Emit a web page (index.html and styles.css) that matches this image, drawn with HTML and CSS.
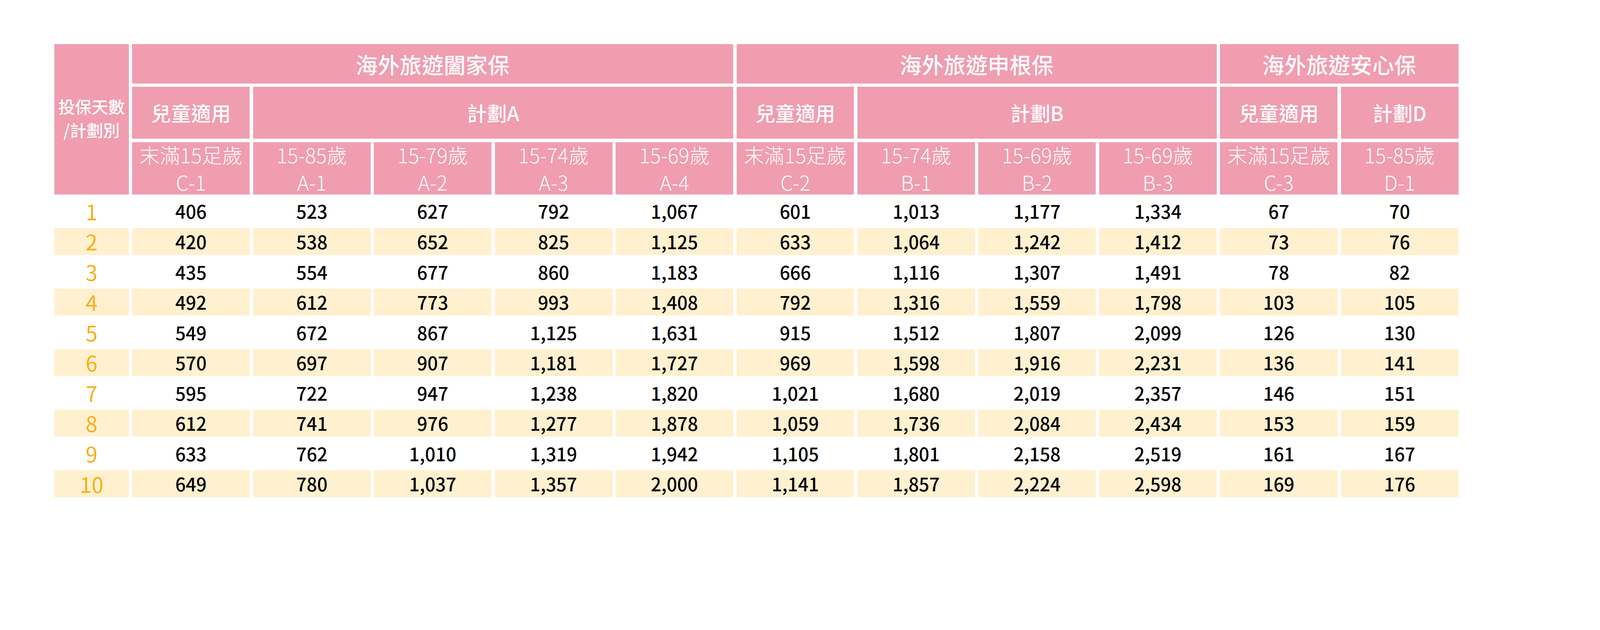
FILE: index.html
```html
<!DOCTYPE html>
<html lang="zh-Hant">
<head>
<meta charset="utf-8">
<title>海外旅遊保險費率表</title>
<link rel="stylesheet" href="styles.css">
</head>
<body>
<div class="page">
  <div class="rate-table">
    <div class="cell head corner">投保天數<br>/計劃別</div>
    <div class="cell head title span5">海外旅遊闔家保</div>
    <div class="cell head title span4">海外旅遊申根保</div>
    <div class="cell head title span2">海外旅遊安心保</div>

    <div class="cell head plan">兒童適用</div>
    <div class="cell head plan span4">計劃A</div>
    <div class="cell head plan">兒童適用</div>
    <div class="cell head plan span3">計劃B</div>
    <div class="cell head plan">兒童適用</div>
    <div class="cell head plan">計劃D</div>

    <div class="cell head age">末滿15足歲<br>C-1</div>
    <div class="cell head age">15-85歲<br>A-1</div>
    <div class="cell head age">15-79歲<br>A-2</div>
    <div class="cell head age">15-74歲<br>A-3</div>
    <div class="cell head age">15-69歲<br>A-4</div>
    <div class="cell head age">末滿15足歲<br>C-2</div>
    <div class="cell head age">15-74歲<br>B-1</div>
    <div class="cell head age">15-69歲<br>B-2</div>
    <div class="cell head age">15-69歲<br>B-3</div>
    <div class="cell head age">末滿15足歲<br>C-3</div>
    <div class="cell head age">15-85歲<br>D-1</div>

    <div class="cell day">1</div><div class="cell val">406</div><div class="cell val">523</div><div class="cell val">627</div><div class="cell val">792</div><div class="cell val">1,067</div><div class="cell val">601</div><div class="cell val">1,013</div><div class="cell val">1,177</div><div class="cell val">1,334</div><div class="cell val">67</div><div class="cell val">70</div>

    <div class="cell day alt">2</div><div class="cell val alt">420</div><div class="cell val alt">538</div><div class="cell val alt">652</div><div class="cell val alt">825</div><div class="cell val alt">1,125</div><div class="cell val alt">633</div><div class="cell val alt">1,064</div><div class="cell val alt">1,242</div><div class="cell val alt">1,412</div><div class="cell val alt">73</div><div class="cell val alt">76</div>

    <div class="cell day">3</div><div class="cell val">435</div><div class="cell val">554</div><div class="cell val">677</div><div class="cell val">860</div><div class="cell val">1,183</div><div class="cell val">666</div><div class="cell val">1,116</div><div class="cell val">1,307</div><div class="cell val">1,491</div><div class="cell val">78</div><div class="cell val">82</div>

    <div class="cell day alt">4</div><div class="cell val alt">492</div><div class="cell val alt">612</div><div class="cell val alt">773</div><div class="cell val alt">993</div><div class="cell val alt">1,408</div><div class="cell val alt">792</div><div class="cell val alt">1,316</div><div class="cell val alt">1,559</div><div class="cell val alt">1,798</div><div class="cell val alt">103</div><div class="cell val alt">105</div>

    <div class="cell day">5</div><div class="cell val">549</div><div class="cell val">672</div><div class="cell val">867</div><div class="cell val">1,125</div><div class="cell val">1,631</div><div class="cell val">915</div><div class="cell val">1,512</div><div class="cell val">1,807</div><div class="cell val">2,099</div><div class="cell val">126</div><div class="cell val">130</div>

    <div class="cell day alt">6</div><div class="cell val alt">570</div><div class="cell val alt">697</div><div class="cell val alt">907</div><div class="cell val alt">1,181</div><div class="cell val alt">1,727</div><div class="cell val alt">969</div><div class="cell val alt">1,598</div><div class="cell val alt">1,916</div><div class="cell val alt">2,231</div><div class="cell val alt">136</div><div class="cell val alt">141</div>

    <div class="cell day">7</div><div class="cell val">595</div><div class="cell val">722</div><div class="cell val">947</div><div class="cell val">1,238</div><div class="cell val">1,820</div><div class="cell val">1,021</div><div class="cell val">1,680</div><div class="cell val">2,019</div><div class="cell val">2,357</div><div class="cell val">146</div><div class="cell val">151</div>

    <div class="cell day alt">8</div><div class="cell val alt">612</div><div class="cell val alt">741</div><div class="cell val alt">976</div><div class="cell val alt">1,277</div><div class="cell val alt">1,878</div><div class="cell val alt">1,059</div><div class="cell val alt">1,736</div><div class="cell val alt">2,084</div><div class="cell val alt">2,434</div><div class="cell val alt">153</div><div class="cell val alt">159</div>

    <div class="cell day">9</div><div class="cell val">633</div><div class="cell val">762</div><div class="cell val">1,010</div><div class="cell val">1,319</div><div class="cell val">1,942</div><div class="cell val">1,105</div><div class="cell val">1,801</div><div class="cell val">2,158</div><div class="cell val">2,519</div><div class="cell val">161</div><div class="cell val">167</div>

    <div class="cell day alt">10</div><div class="cell val alt">649</div><div class="cell val alt">780</div><div class="cell val alt">1,037</div><div class="cell val alt">1,357</div><div class="cell val alt">2,000</div><div class="cell val alt">1,141</div><div class="cell val alt">1,857</div><div class="cell val alt">2,224</div><div class="cell val alt">2,598</div><div class="cell val alt">169</div><div class="cell val alt">176</div>
  </div>
</div>
</body>
</html>
```

FILE: styles.css
```css
:root {
  /* one unit = one pixel of the 4805px-wide design */
  --u: calc(100vw / 4805);
}

html, body {
  margin: 0;
  padding: 0;
  background: #ffffff;
  overflow: hidden;
}

body {
  font-family: "Noto Sans CJK TC", "Noto Sans CJK SC", sans-serif;
}

.page {
  padding: calc(133 * var(--u)) 0 0 calc(163 * var(--u));
}

.rate-table {
  display: grid;
  grid-template-columns: calc(224 * var(--u)) repeat(11, calc(353 * var(--u)));
  grid-template-rows: calc(118 * var(--u)) calc(156 * var(--u)) calc(157 * var(--u)) repeat(10, calc(81 * var(--u)));
  gap: calc(10 * var(--u));
}

.cell {
  display: flex;
  align-items: center;
  justify-content: center;
  text-align: center;
}

.head {
  background: #f09db0;
  color: #ffffff;
}

.corner {
  grid-row: span 3;
  font-size: calc(50 * var(--u));
  font-weight: 500;
  line-height: calc(71 * var(--u));
  padding-bottom: calc(8 * var(--u));
}

.title {
  font-size: calc(66 * var(--u));
  font-weight: 500;
  line-height: 1;
}

.plan {
  font-size: calc(60 * var(--u));
  font-weight: 500;
  line-height: 1;
}

.age {
  font-size: calc(61 * var(--u));
  font-weight: 300;
  line-height: calc(82 * var(--u));
}

.span2 { grid-column: span 2; }
.span3 { grid-column: span 3; }
.span4 { grid-column: span 4; }
.span5 { grid-column: span 5; }

.day {
  color: #fbad18;
  font-size: calc(64 * var(--u));
  font-weight: 400;
  line-height: 1;
}

.val {
  color: #000000;
  font-size: calc(55 * var(--u));
  font-weight: 500;
  line-height: 1;
}

.alt {
  background: #fff1cf;
}
```
